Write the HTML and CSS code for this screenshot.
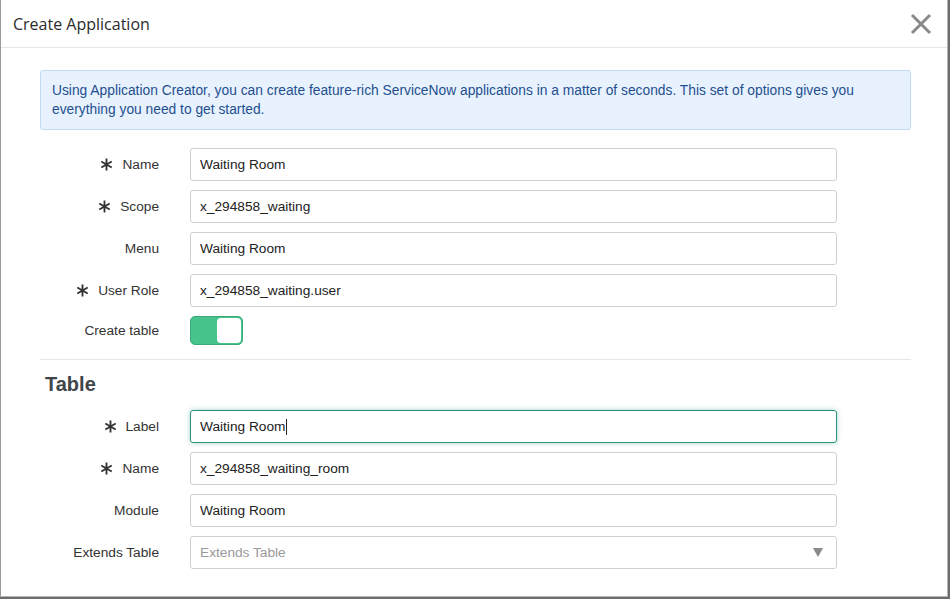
FILE: index.html
```html
<!DOCTYPE html>
<html>
<head>
<meta charset="utf-8">
<link rel="stylesheet" href="styles.css">
</head>
<body>
<div class="dialog">
  <div class="header">
    <h1 class="title">Create Application</h1>
    <svg class="close" width="22" height="22" viewBox="0 0 22 22"><path d="M2 2 L20 20 M20 2 L2 20" stroke="#8a8a8a" stroke-width="3" fill="none"/></svg>
  </div>
  <div class="body">
    <div class="alert">Using Application Creator, you can create feature-rich ServiceNow applications in a matter of seconds. This set of options gives you everything you need to get started.</div>
    <div class="form">
      <label class="lbl"><svg class="req" viewBox="0 0 12 12"><path d="M6 0.5 V11.5 M1.2 3.2 L10.8 8.8 M10.8 3.2 L1.2 8.8" stroke="#333" stroke-width="1.7"/></svg>Name</label>
      <div class="input">Waiting Room</div>
      <label class="lbl"><svg class="req" viewBox="0 0 12 12"><path d="M6 0.5 V11.5 M1.2 3.2 L10.8 8.8 M10.8 3.2 L1.2 8.8" stroke="#333" stroke-width="1.7"/></svg>Scope</label>
      <div class="input">x_294858_waiting</div>
      <label class="lbl">Menu</label>
      <div class="input">Waiting Room</div>
      <label class="lbl"><svg class="req" viewBox="0 0 12 12"><path d="M6 0.5 V11.5 M1.2 3.2 L10.8 8.8 M10.8 3.2 L1.2 8.8" stroke="#333" stroke-width="1.7"/></svg>User Role</label>
      <div class="input">x_294858_waiting.user</div>
      <label class="lbl">Create table</label>
      <div class="toggle-cell"><div class="toggle"><span class="knob"></span></div></div>
    </div>
    <hr class="sep">
    <h2 class="section">Table</h2>
    <div class="form">
      <label class="lbl"><svg class="req" viewBox="0 0 12 12"><path d="M6 0.5 V11.5 M1.2 3.2 L10.8 8.8 M10.8 3.2 L1.2 8.8" stroke="#333" stroke-width="1.7"/></svg>Label</label>
      <div class="input focus">Waiting Room<span class="caret"></span></div>
      <label class="lbl"><svg class="req" viewBox="0 0 12 12"><path d="M6 0.5 V11.5 M1.2 3.2 L10.8 8.8 M10.8 3.2 L1.2 8.8" stroke="#333" stroke-width="1.7"/></svg>Name</label>
      <div class="input">x_294858_waiting_room</div>
      <label class="lbl">Module</label>
      <div class="input">Waiting Room</div>
      <label class="lbl">Extends Table</label>
      <div class="input select"><span class="placeholder">Extends Table</span><svg class="arrow" width="10" height="9" viewBox="0 0 10 9"><path d="M0 0 H10 L5 9 Z" fill="#8a8a8a"/></svg></div>
    </div>
  </div>
</div>
</body>
</html>
```
FILE: styles.css
```css
* { box-sizing: border-box; }
html, body { margin: 0; padding: 0; }
body {
  width: 950px;
  height: 599px;
  background: #6d6d6d;
  overflow: hidden;
  font-family: "Liberation Sans", Arial, sans-serif;
}
.dialog {
  width: 948px;
  height: 597px;
  background: #fff;
  border-left: 1px solid #9a9a9a;
  border-right: 1px solid #b5b5b5;
  border-bottom: 1px solid #b5b5b5;
  display: flex;
  flex-direction: column;
}
.header {
  height: 48px;
  border-bottom: 1px solid #e6e6e6;
  display: flex;
  align-items: center;
  justify-content: space-between;
  padding: 0 15px 0 12px;
}
.title {
  margin: 0;
  font-family: "Open Sans", sans-serif;
  font-weight: 400;
  font-size: 16px;
  color: #2b2b2b;
}
.close { display: block; margin-top: 1px; }
.body {
  padding: 22px 36px 0 39px;
}
.alert {
  background: #e7f2fe;
  border: 1px solid #c3dcf6;
  border-radius: 3px;
  color: #1f4f8f;
  font-size: 13.8px;
  line-height: 19px;
  padding: 10px 40px 10px 11px;
  height: 60px;
}
.form {
  display: grid;
  grid-template-columns: 119px 647px;
  column-gap: 31px;
  row-gap: 9px;
  align-items: center;
}
.body > .alert + .form { margin-top: 18px; }
.lbl {
  display: flex;
  justify-content: flex-end;
  align-items: center;
  font-size: 13.7px;
  color: #333;
}
.req {
  width: 13px;
  height: 13px;
  margin-right: 9px;
}
.input {
  height: 33px;
  border: 1px solid #cfcfcf;
  border-radius: 3px;
  padding: 0 9px;
  display: flex;
  align-items: center;
  font-size: 13.7px;
  color: #222;
}
.input.focus {
  border-color: #2f8e7c;
  box-shadow: 0 0 5px rgba(47, 160, 140, 0.45);
}
.caret {
  display: inline-block;
  width: 1px;
  height: 16px;
  background: #222;
  margin-left: 1px;
}
.select { justify-content: space-between; padding-right: 13px; }
.placeholder { color: #999; }
.toggle-cell { height: 29px; display: flex; align-items: center; }
.toggle {
  width: 53px;
  height: 29px;
  background: #47c48b;
  border: 1px solid #3aa877;
  border-radius: 5px;
  position: relative;
}
.knob {
  position: absolute;
  right: 1px;
  top: 1px;
  width: 24px;
  height: 25px;
  background: #fff;
  border-radius: 4px;
}
.sep {
  margin: 14px 0 0 0;
  border: 0;
  border-top: 1px solid #e6e6e6;
}
.section {
  margin: 12px 0 14px 5px;
  font-size: 20px;
  line-height: 24px;
  font-weight: 700;
  color: #3f4549;
}
```
